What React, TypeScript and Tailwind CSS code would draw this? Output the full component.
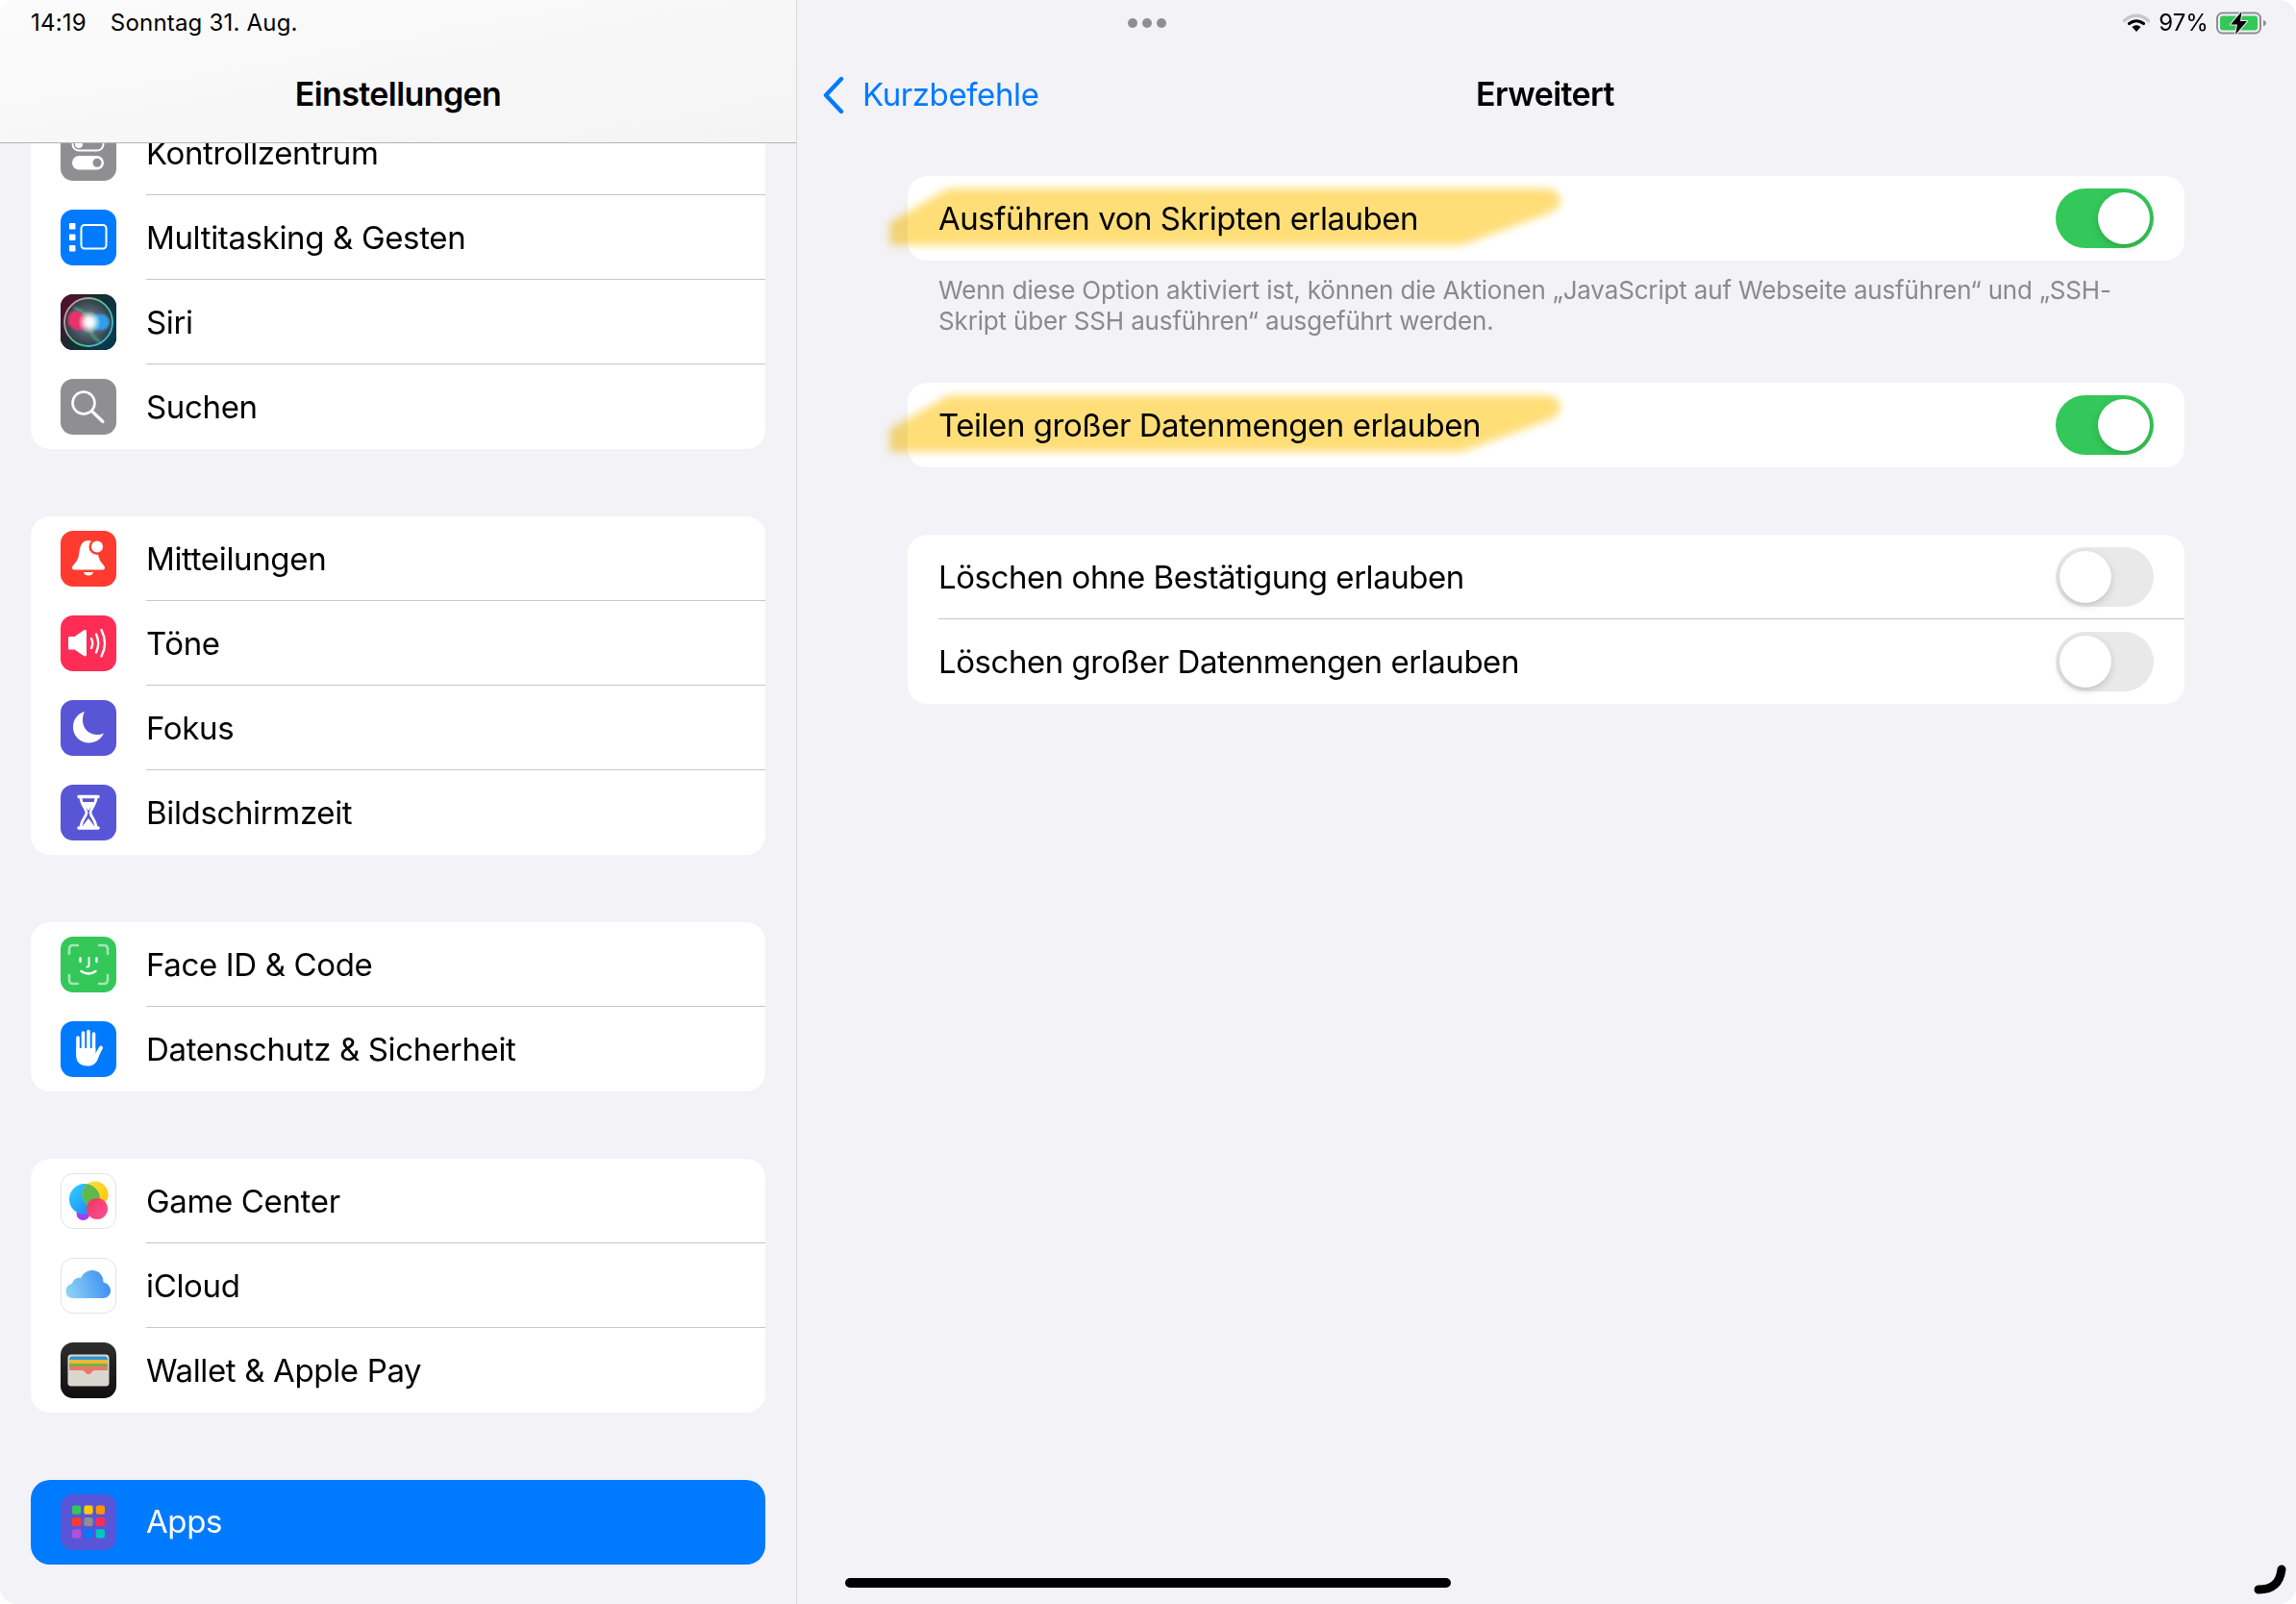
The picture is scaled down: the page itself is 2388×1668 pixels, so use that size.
import React from "react";

const Ico = ({ bg, border, children }: { bg: string; border?: boolean; children: React.ReactNode }) => (
  <div className={`w-[58px] h-[58px] shrink-0 rounded-[13px] overflow-hidden ${bg} ${border ? "border border-[#e3e3e6]" : ""}`}>
    <svg viewBox="0 0 58 58" className={`block ${border ? "-m-px w-[58px] h-[58px]" : "w-full h-full"}`}>{children}</svg>
  </div>
);

const Control = () => (
  <Ico bg="bg-[#8e8e93]">
    <rect x="12.500" y="13.500" width="32" height="13" rx="6.500" fill="none" stroke="#fff" strokeWidth="2" />
    <circle cx="19" cy="20" r="4" fill="#fff" />
    <rect x="12" y="32" width="33" height="14.500" rx="7.200" fill="#fff" />
    <circle cx="38" cy="39.200" r="4.500" fill="#8e8e93" />
  </Ico>
);
const Multi = () => (
  <Ico bg="bg-[#007aff]">
    <rect x="9" y="14" width="6.500" height="6.500" rx="1" fill="#fff" />
    <rect x="9" y="25.500" width="6.500" height="6.500" rx="1" fill="#fff" />
    <rect x="9" y="37" width="6.500" height="6.500" rx="1" fill="#fff" />
    <rect x="21.500" y="16" width="26" height="24.500" rx="3.500" fill="none" stroke="#fff" strokeWidth="2" />
  </Ico>
);
const Siri = () => (
  <Ico bg="bg-black">
    <defs>
      <linearGradient id="sb" x1="0" y1="0" x2="1" y2="0.6">
        <stop offset="0" stopColor="#5c0a30" />
        <stop offset="0.5" stopColor="#1a2a30" />
        <stop offset="1" stopColor="#0a3a48" />
      </linearGradient>
      <linearGradient id="sr" x1="0" y1="0.2" x2="1" y2="0.8">
        <stop offset="0" stopColor="#f08a9c" />
        <stop offset="0.5" stopColor="#4fc78e" />
        <stop offset="1" stopColor="#45b0ea" />
      </linearGradient>
      <radialGradient id="sc">
        <stop offset="0" stopColor="#7a8c98" />
        <stop offset="1" stopColor="#2c3c46" />
      </radialGradient>
      <radialGradient id="sw">
        <stop offset="0" stopColor="#fff" />
        <stop offset="0.35" stopColor="#fff" stopOpacity="0.9" />
        <stop offset="1" stopColor="#fff" stopOpacity="0" />
      </radialGradient>
      <filter id="sbl"><feGaussianBlur stdDeviation="1" /></filter>
    </defs>
    <rect width="58" height="58" fill="url(#sb)" />
    <circle cx="29" cy="29" r="25" fill="url(#sc)" stroke="url(#sr)" strokeWidth="1.800" />
    <path d="M8 24 C10 15 20 15 27 24 C30 28 30 31 27 34 C20 41 10 36 8 30 Z" fill="#e8326a" filter="url(#sbl)" />
    <path d="M30 28 C36 17 50 19 51 29 C50 39 38 41 30 31 Z" fill="#2f9fe8" filter="url(#sbl)" />
    <path d="M14 14 Q30 20 30 30 Q30 44 42 50" fill="none" stroke="#4fc78e" strokeOpacity="0.55" strokeWidth="3" filter="url(#sbl)" />
    <circle cx="30" cy="29" r="12" fill="url(#sw)" />
  </Ico>
);
const Search = () => (
  <Ico bg="bg-[#8e8e93]">
    <circle cx="24" cy="25" r="11.500" fill="none" stroke="#fff" strokeWidth="2.600" />
    <path d="M32.500 33.500 L44 44.500" stroke="#fff" strokeWidth="3.200" strokeLinecap="round" />
  </Ico>
);
const Bell = () => (
  <Ico bg="bg-[#ff3b30]">
    <path d="M29 10 C24 10 22 13 20.500 17 C19 22 19.500 27 17 31 C15.500 34 12 36 12 38.500 C12 40 13 40.500 15 40.500 L43 40.500 C45 40.500 46 40 46 38.500 C46 36 42.500 34 41 31 C39 27 39 22 37.500 17 C36 13 34 10 29 10 Z" fill="#fff" />
    <path d="M24 43 L34 43 C33.500 45.500 31.500 46.500 29 46.500 C26.500 46.500 24.500 45.500 24 43 Z" fill="#fff" />
    <circle cx="38" cy="16.500" r="8.500" fill="#ff3b30" />
    <circle cx="38" cy="16.500" r="6" fill="#fff" />
  </Ico>
);
const Tone = () => (
  <Ico bg="bg-[#ff2d55]">
    <path d="M8 23.500 C8 22.500 8.500 22 9.500 22 L14.500 22 L24 15.500 C25.500 14.500 27 15 27 17 L27 40.500 C27 42.500 25.500 43 24 42 L14.500 35.500 L9.500 35.500 C8.500 35.500 8 35 8 34 Z" fill="#fff" />
    <path d="M32 24 Q34.500 29 32 34" fill="none" stroke="#fff" strokeWidth="2.400" strokeLinecap="round" />
    <path d="M37 19.500 Q41.500 29 37 38.500" fill="none" stroke="#fff" strokeWidth="2.400" strokeLinecap="round" />
    <path d="M42.500 15 Q49.500 29 42.500 42.500" fill="none" stroke="#fff" strokeWidth="2.400" strokeLinecap="round" />
  </Ico>
);
const Moon = () => (
  <Ico bg="bg-[#5856d6]">
    <path d="M25 12 C17.500 14 13 20.500 13 28 C13 37 20 44.500 29.500 44.500 C36 44.500 42 41 45 34.500 C42.500 35.500 40.500 36 38 36 C29.500 36 23 29.500 23 21 C23 17.500 23.500 15 25 12 Z" fill="#fff" />
  </Ico>
);
const Hourglass = () => (
  <Ico bg="bg-[#5856d6]">
    <path d="M19 12.500 L39 12.500 M19 45 L39 45" stroke="#fff" strokeWidth="3.500" strokeLinecap="round" />
    <path d="M21 13 C21 21 27 25 27 29 C27 33 21 37 21 45" fill="none" stroke="#fff" strokeWidth="2.800" />
    <path d="M37 13 C37 21 31 25 31 29 C31 33 37 37 37 45" fill="none" stroke="#fff" strokeWidth="2.800" />
    <path d="M22.500 18 L35.500 18 C34.500 21.500 31 24 29 27 C27 24 23.500 21.500 22.500 18 Z" fill="#fff" />
    <path d="M29 35 L36 44 L22 44 Z" fill="#fff" />
  </Ico>
);
const Face = () => (
  <Ico bg="bg-[#34c759]">
    <g fill="none" stroke="#fff" strokeOpacity="0.55" strokeWidth="2.600" strokeLinecap="round">
      <path d="M9 18 L9 13 Q9 9 13 9 L18 9" />
      <path d="M40 9 L45 9 Q49 9 49 13 L49 18" />
      <path d="M9 40 L9 45 Q9 49 13 49 L18 49" />
      <path d="M49 40 L49 45 Q49 49 45 49 L40 49" />
    </g>
    <g fill="none" stroke="#fff" strokeWidth="2.400" strokeLinecap="round">
      <path d="M20.500 22.500 L20.500 26" />
      <path d="M37.500 22.500 L37.500 26" />
      <path d="M29.500 22 L29.500 30 Q29.500 31.500 27.500 31.500" strokeWidth="2" />
      <path d="M21.500 36 Q29 41 36.500 36" />
    </g>
  </Ico>
);
const Hand = () => (
  <Ico bg="bg-[#007aff]">
    <g stroke="#fff" strokeWidth="3.600" strokeLinecap="round">
      <path d="M18 17 L18 32" />
      <path d="M23.500 12 L23.500 30" />
      <path d="M29 10.500 L29 30" />
      <path d="M34.500 13 L34.500 32" />
      <path d="M36.500 37 L42 27.500" strokeWidth="4" />
    </g>
    <path d="M16.200 28 L36.300 28 L36.300 34 L43 29 L38 41 C36 44.500 33 46.500 28 46.500 C21 46.500 16.200 42.500 16.200 36 Z" fill="#fff" />
  </Ico>
);
const Game = () => (
  <Ico bg="bg-white" border>
    <defs>
      <linearGradient id="gb" x1="0" y1="0" x2="1" y2="1">
        <stop offset="0" stopColor="#2fd2ff" />
        <stop offset="1" stopColor="#1c7cf5" />
      </linearGradient>
      <linearGradient id="gy" x1="0" y1="0" x2="1" y2="1">
        <stop offset="0" stopColor="#ffe14a" />
        <stop offset="1" stopColor="#ffc400" />
      </linearGradient>
      <linearGradient id="gp" x1="0" y1="0" x2="1" y2="1">
        <stop offset="0" stopColor="#f0355a" />
        <stop offset="1" stopColor="#ff4f9a" />
      </linearGradient>
      <clipPath id="cb"><circle cx="25" cy="27" r="16" /></clipPath>
    </defs>
    <circle cx="23.500" cy="42" r="7" fill="#a63ff0" />
    <circle cx="25" cy="27" r="16" fill="url(#gb)" />
    <circle cx="36" cy="22" r="13.500" fill="url(#gy)" />
    <circle cx="36" cy="22" r="13.500" fill="#5cb94a" clipPath="url(#cb)" />
    <circle cx="38" cy="37" r="11" fill="url(#gp)" />
  </Ico>
);
const Cloud = () => (
  <Ico bg="bg-white" border>
    <defs>
      <linearGradient id="cg" x1="0" y1="0.6" x2="1" y2="0.4">
        <stop offset="0" stopColor="#8dd3f3" />
        <stop offset="1" stopColor="#3b8cf5" />
      </linearGradient>
    </defs>
    <path d="M13 42 C8 42 5.500 38.500 5.500 34.500 C5.500 30 8.500 27.500 12 27 C13 22.500 17 20 21 21 C23.500 15.500 28.500 13 33 13 C40 13 44.500 18.500 44.500 25.500 C49 26.500 52 30 52 34.500 C52 38.500 48.500 42 44 42 Z" fill="url(#cg)" />
  </Ico>
);
const Wallet = () => (
  <Ico bg="bg-gradient-to-b from-[#2e2e2e] to-[#0f0f0f]">
    <rect x="7.500" y="12.500" width="43" height="33" rx="3.500" fill="#d9d6cf" />
    <path d="M9 18 Q9 14.500 12 14.500 L46 14.500 Q49 14.500 49 18 L49 20 L9 20 Z" fill="#2f95d8" />
    <rect x="9" y="18" width="40" height="5" fill="#f2b632" />
    <rect x="9" y="22" width="40" height="3.500" fill="#6cb54a" />
    <rect x="9" y="25" width="40" height="4" fill="#ee7564" />
    <path d="M22 29 Q25 29 26 31.500 Q29 34.500 32 31.500 Q33 29 36 29 Z" fill="#ee7564" />
  </Ico>
);
const AppsIcon = () => {
  const colors = ["#34c759", "#ffcc00", "#ff9500", "#ff3b30", "#8e8e93", "#ff2d55", "#af52de", "#007aff", "#00c7be"];
  return (
    <Ico bg="bg-[#5856d6]">
      {colors.map((c, i) => (
        <rect key={c} x={12 + (i % 3) * 12.4} y={11.500 + Math.floor(i / 3) * 12.4} width="9.200" height="9.200" rx="2.200" fill={c} />
      ))}
    </Ico>
  );
};

const SideRow = ({ icon, label, last }: { icon: React.ReactNode; label: string; last?: boolean }) => (
  <div className="h-[88px] flex items-center pl-[31px]">
    {icon}
    <div className={`ml-[31px] pt-[2px] flex-1 h-full flex items-center text-[33px] tracking-[-0.35px] text-black ${last ? "" : "border-b border-[#c6c6c8]"}`}>
      {label}
    </div>
  </div>
);

const SideGroup = ({ rows }: { rows: [React.ReactNode, string][] }) => (
  <div className="bg-white rounded-[20px] overflow-hidden">
    {rows.map(([icon, label], i) => (
      <SideRow key={label} icon={icon} label={label} last={i === rows.length - 1} />
    ))}
  </div>
);

const Toggle = ({ on }: { on?: boolean }) => (
  <div className={`w-[102px] h-[62px] rounded-full p-1 flex shrink-0 ${on ? "bg-[#34c759] justify-end" : "bg-[#e9e9ea] justify-start"}`}>
    <div className="w-[54px] h-[54px] rounded-full bg-white shadow-[0_3px_8px_rgba(0,0,0,0.15),0_1px_2px_rgba(0,0,0,0.06)]" />
  </div>
);

const Highlight = () => (
  <svg
    width="720"
    height="88"
    viewBox="0 0 720 88"
    className="absolute left-[-30px] top-0 pointer-events-none mix-blend-multiply overflow-visible blur-[4px]"
  >
    <path
      d="M14 50 L73 16 L692 16 Q704 16 706 25 Q706 32 696 36 L606 69 L14 69 Z"
      fill="#ffde78"
      stroke="#ffde78"
      strokeWidth="6"
      strokeLinejoin="round"
    />
  </svg>
);

const SetRow = ({ label, on, last, mark }: { label: string; on?: boolean; last?: boolean; mark?: boolean }) => (
  <div className="h-[88px] relative">
    <div className={`h-full ml-[32px] flex items-center justify-between pr-[32px] text-[33px] tracking-[-0.46px] text-black ${last ? "" : "border-b border-[#c6c6c8]"}`}>
      <span className="pt-[2px]">{label}</span>
      <Toggle on={on} />
    </div>
    {mark && <Highlight />}
  </div>
);

export default function App() {
  return (
    <div className="w-[2388px] h-[1668px] bg-white font-[Inter,'Liberation_Sans',sans-serif]">
      <div className="relative w-full h-full rounded-[18px] overflow-hidden bg-[#f2f2f7] flex">
        {/* Sidebar */}
        <div className="w-[829px] h-full shrink-0 flex flex-col border-r border-[#d9d9dd]">
          <div className="h-[149px] shrink-0 relative z-10 bg-gradient-to-br from-[#fbfbfb] to-[#f4f4f5] border-b border-[#b2b2b4] flex flex-col">
            <div className="h-[48px] pl-[32px] flex items-center text-[24px] tracking-[0.2px] text-black">
              <span>14:19</span>
              <span className="ml-[25px]">Sonntag 31. Aug.</span>
            </div>
            <div className="flex-1 flex items-center justify-center text-[34px] font-semibold tracking-[-0.6px] pb-[2px] text-black">
              Einstellungen
            </div>
          </div>
          <div className="flex-1 overflow-hidden px-[32px]">
            <div className="-mt-[34px] flex flex-col gap-[70px]">
              <SideGroup
                rows={[
                  [<Control />, "Kontrollzentrum"],
                  [<Multi />, "Multitasking & Gesten"],
                  [<Siri />, "Siri"],
                  [<Search />, "Suchen"],
                ]}
              />
              <SideGroup
                rows={[
                  [<Bell />, "Mitteilungen"],
                  [<Tone />, "Töne"],
                  [<Moon />, "Fokus"],
                  [<Hourglass />, "Bildschirmzeit"],
                ]}
              />
              <SideGroup
                rows={[
                  [<Face />, "Face ID & Code"],
                  [<Hand />, "Datenschutz & Sicherheit"],
                ]}
              />
              <SideGroup
                rows={[
                  [<Game />, "Game Center"],
                  [<Cloud />, "iCloud"],
                  [<Wallet />, "Wallet & Apple Pay"],
                ]}
              />
              <div className="h-[88px] bg-[#007aff] rounded-[20px] flex items-center pl-[31px] text-white">
                <AppsIcon />
                <div className="ml-[31px] text-[33px] tracking-[-0.4px]">Apps</div>
              </div>
            </div>
          </div>
        </div>

        {/* Detail */}
        <div className="flex-1 min-w-0 flex flex-col">
          <div className="h-[148px] shrink-0 flex flex-col">
            <div className="h-[48px] flex items-center justify-end pr-[30px]">
              <svg width="28" height="20" viewBox="0 0 28 20" className="mr-[9px]">
                <path d="M1.500 7.500 C9 0.500 19 0.500 26.500 7.500" fill="none" stroke="#c7c7cc" strokeWidth="3.400" strokeLinecap="round" />
                <path d="M6.500 10.500 C11 7 17 7 21.500 10.500" fill="none" stroke="#000" strokeWidth="3.200" strokeLinecap="round" />
                <path d="M9.500 14 C12.500 11.500 15.500 11.500 18.500 14 L14 19 Z" fill="#000" />
              </svg>
              <span className="text-[24px] tracking-[0.1px] text-black">97%</span>
              <svg width="53" height="24" viewBox="0 0 53 24" className="ml-[8px] overflow-visible">
                <rect x="1" y="1.500" width="45" height="21" rx="5.500" fill="none" stroke="#8e8e93" strokeWidth="2" />
                <rect x="4" y="4.500" width="39" height="15" rx="3" fill="#34c759" />
                <path d="M49 8.500 Q52 10 52 12 Q52 14 49 15.500 Z" fill="#8e8e93" />
                <path d="M26.500 0 L15 13.500 L22 13.500 L20 24 L32 10 L25 10 Z" fill="#000" stroke="#f2f2f7" strokeWidth="2" paintOrder="stroke" strokeLinejoin="round" />
              </svg>
            </div>
            <div className="flex-1 relative flex items-center justify-center pb-[2px] pr-[3px]">
              <span className="text-[34px] font-semibold tracking-[-0.6px] text-black">Erweitert</span>
              <div className="absolute left-[25px] top-[26px] flex items-center text-[#007aff]">
                <svg width="26" height="40" viewBox="0 0 26 40">
                  <path d="M21 3 L5 20 L21 37" fill="none" stroke="#007aff" strokeWidth="4.400" strokeLinecap="round" strokeLinejoin="round" />
                </svg>
                <span className="ml-[17px] text-[33px] tracking-[-0.4px]">Kurzbefehle</span>
              </div>
            </div>
          </div>

          <div className="pl-[115px] pr-[116px] pt-[35px] flex flex-col">
            <div className="bg-white rounded-[20px] relative">
              <SetRow label="Ausführen von Skripten erlauben" on last mark />
            </div>
            <div className="pl-[32px] pt-[15px] pb-[48px] text-[26px] leading-[32px] tracking-[-0.16px] text-[#8a8a8e]">
              Wenn diese Option aktiviert ist, können die Aktionen „JavaScript auf Webseite ausführen“ und „SSH-
              <br />
              Skript über SSH ausführen“ ausgeführt werden.
            </div>
            <div className="bg-white rounded-[20px] relative">
              <SetRow label="Teilen großer Datenmengen erlauben" on last mark />
            </div>
            <div className="bg-white rounded-[20px] mt-[70px] overflow-hidden">
              <SetRow label="Löschen ohne Bestätigung erlauben" />
              <SetRow label="Löschen großer Datenmengen erlauben" last />
            </div>
          </div>
        </div>

        {/* overlays */}
        <div className="absolute left-[1173px] top-[19px] flex gap-[5px]">
          <div className="w-[10px] h-[10px] rounded-full bg-[#8e8e93]" />
          <div className="w-[10px] h-[10px] rounded-full bg-[#8e8e93]" />
          <div className="w-[10px] h-[10px] rounded-full bg-[#8e8e93]" />
        </div>
        <div className="absolute left-[879px] top-[1641px] w-[630px] h-[10px] rounded-full bg-black" />
        <svg width="40" height="40" viewBox="0 0 40 40" className="absolute left-[2342px] top-[1624px]">
          <path d="M7 29 C20 29 29 24 31 8" fill="none" stroke="#000" strokeWidth="9" strokeLinecap="round" />
        </svg>
      </div>
    </div>
  );
}
